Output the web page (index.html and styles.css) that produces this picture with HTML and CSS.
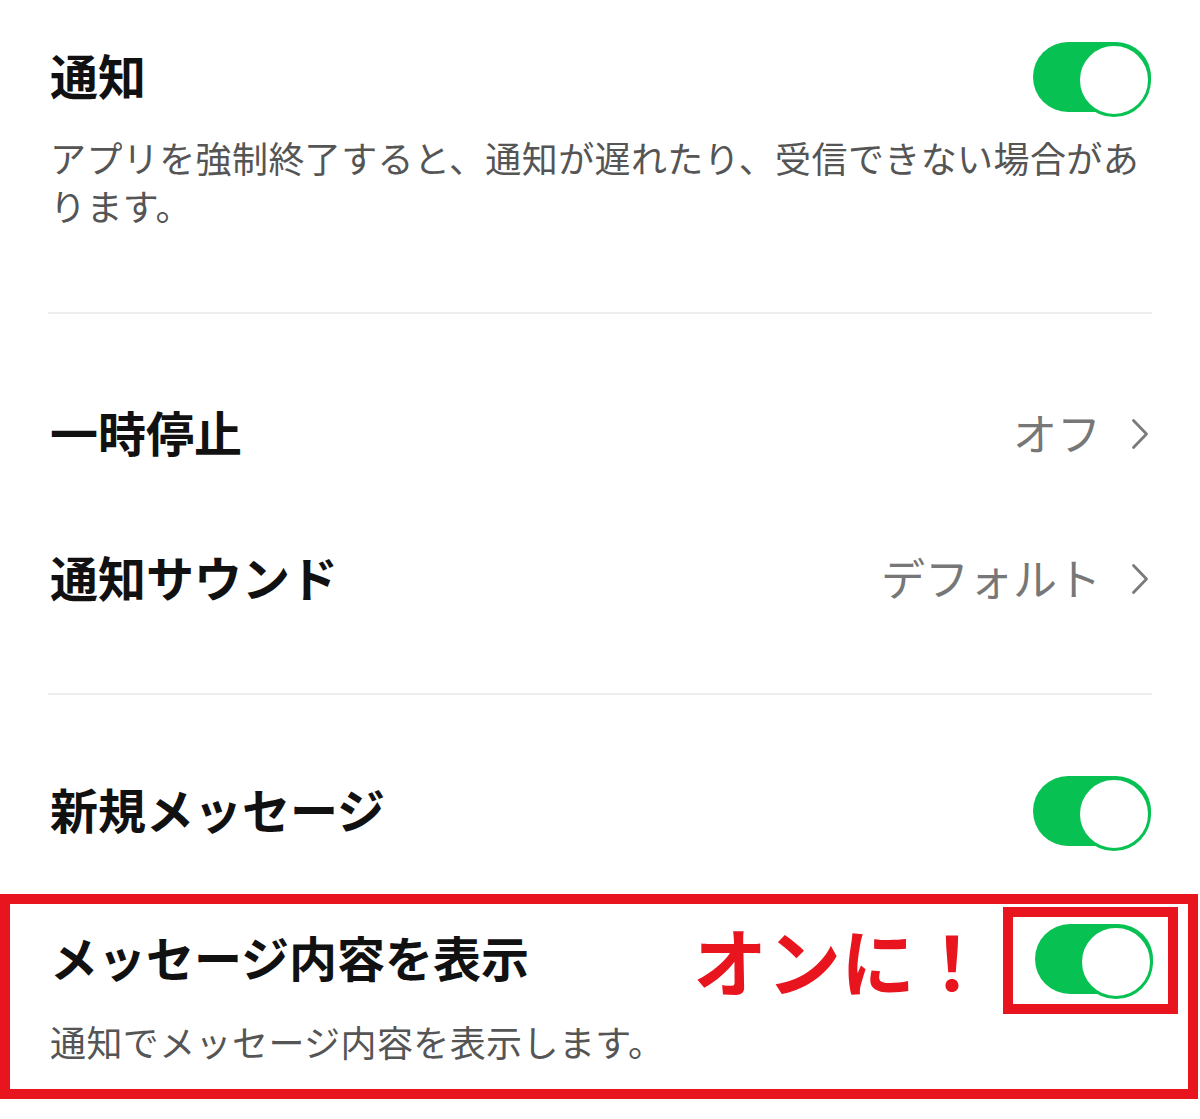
FILE: index.html
```html
<!DOCTYPE html>
<html lang="ja">
<head>
<meta charset="utf-8">
<title>通知設定</title>
<link rel="stylesheet" href="styles.css">
</head>
<body>
<main class="settings">
  <section class="group group-notify">
    <div class="row row-toggle">
      <span class="title">通知</span>
      <span class="toggle" role="switch" aria-checked="true"></span>
    </div>
    <p class="desc">アプリを強制終了すると、通知が遅れたり、受信できない場合があります。</p>
  </section>

  <hr class="divider">

  <section class="group group-links">
    <div class="row row-link">
      <span class="title">一時停止</span>
      <span class="value">オフ<svg class="chev" viewBox="0 0 18 32" width="18" height="32" aria-hidden="true"><polyline points="2.5,2.5 15.5,16 2.5,29.5" fill="none" stroke="#7a7a7a" stroke-width="2.8" stroke-linecap="round" stroke-linejoin="round"/></svg></span>
    </div>
    <div class="row row-link">
      <span class="title">通知サウンド</span>
      <span class="value">デフォルト<svg class="chev" viewBox="0 0 18 32" width="18" height="32" aria-hidden="true"><polyline points="2.5,2.5 15.5,16 2.5,29.5" fill="none" stroke="#7a7a7a" stroke-width="2.8" stroke-linecap="round" stroke-linejoin="round"/></svg></span>
    </div>
  </section>

  <hr class="divider">

  <section class="group group-new">
    <div class="row row-toggle">
      <span class="title">新規メッセージ</span>
      <span class="toggle" role="switch" aria-checked="true"></span>
    </div>
  </section>

  <section class="highlight">
    <div class="row row-toggle">
      <span class="title">メッセージ内容を表示</span>
      <div class="trail">
        <span class="callout">オンに！</span>
        <span class="toggle-wrap">
          <span class="toggle" role="switch" aria-checked="true"></span>
          <span class="ring"></span>
        </span>
      </div>
    </div>
    <p class="desc">通知でメッセージ内容を表示します。</p>
  </section>
</main>
</body>
</html>
```

FILE: styles.css
```css
* { box-sizing: border-box; }

html, body {
  margin: 0;
  padding: 0;
  background: #ffffff;
}

body {
  font-family: "Noto Sans CJK JP", "Noto Sans", sans-serif;
  color: #111111;
  width: 1200px;
  overflow: hidden;
}

.settings {
  display: flex;
  flex-direction: column;
}

.group {
  padding: 0 50px;
}

.group-notify {
  padding-top: 42px;
}

.group-links {
  padding-top: 47px;
  padding-bottom: 42px;
}

.group-new {
  padding-top: 81px;
}

.row {
  display: flex;
  align-items: center;
  justify-content: space-between;
}

.row-toggle {
  height: 70px;
}

.row-link {
  height: 145px;
}

.title {
  font-size: 48px;
  font-weight: 700;
  line-height: 1;
  color: #111111;
  margin-bottom: 6px;
}

.desc {
  margin: 21px 0 0;
  font-size: 36px;
  line-height: 48px;
  letter-spacing: 0.4px;
  color: #555555;
}

.divider {
  border: 0;
  height: 2px;
  margin: 83px 48px 0;
  background: #eeeeee;
}

.group-links + .divider {
  margin-top: 0;
}

.value {
  display: flex;
  align-items: center;
  font-size: 44px;
  line-height: 1;
  color: #777777;
  margin-bottom: 4px;
}

.chev {
  margin-left: 30px;
  margin-right: 1px;
  margin-top: 4px;
}

.toggle {
  position: relative;
  display: block;
  width: 118px;
  height: 70px;
  border-radius: 35px;
  background: #07c152;
  margin-right: -1px;
}

.toggle::after {
  content: "";
  position: absolute;
  right: 0;
  top: 1px;
  width: 68px;
  height: 68px;
  border-radius: 50%;
  background: #ffffff;
  border: 3px solid #07c152;
}

.highlight {
  width: 1198px;
  margin-top: 48px;
  border: 10px solid #e8151e;
  padding: 20px 36px 24px 40px;
}

.highlight .desc {
  margin-top: 23px;
}

.trail {
  display: flex;
  align-items: center;
}

.callout {
  font-size: 74px;
  font-weight: 700;
  line-height: 1;
  color: #e8151e;
  margin-right: 46px;
  margin-top: 0;
}

.toggle-wrap {
  position: relative;
  display: block;
}

.ring {
  position: absolute;
  left: -32px;
  right: -26px;
  top: -17px;
  bottom: -20px;
  border: 10px solid #e8151e;
}
```
